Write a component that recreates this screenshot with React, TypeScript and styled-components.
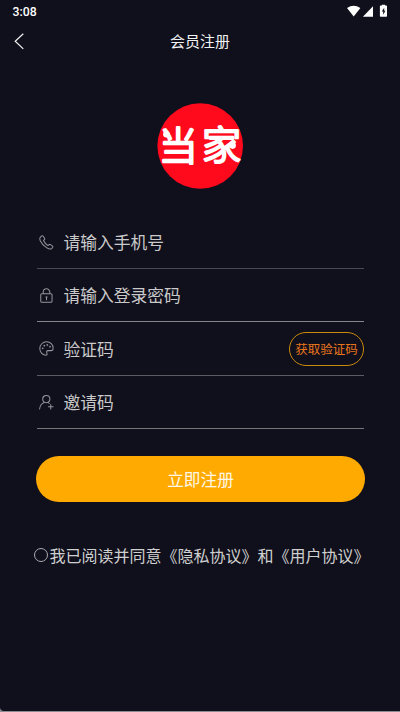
import React from 'react';
import styled, { createGlobalStyle } from 'styled-components';

const GlobalStyle = createGlobalStyle`
  * { box-sizing: border-box; }
  body { margin: 0; background: #8c8b90; overflow: hidden; }
  button, input { font-family: inherit; }
`;

const Screen = styled.main`
  width: 400px;
  height: 711px;
  background: #100f1c;
  border-bottom-left-radius: 4px;
  font-family: "Noto Sans CJK SC", sans-serif;
  color: #cfcfcf;
  display: flex;
  flex-direction: column;
`;

const StatusBar = styled.div`
  height: 24px;
  padding: 0 12px 0 12.5px;
  display: flex;
  align-items: center;
  justify-content: space-between;
  font: 500 12.3px/24px Roboto, sans-serif;
  color: #fff;
`;

const StatusIcons = styled.svg`
  display: block;
  width: 42px;
  height: 14px;
  margin-top: -3px;
`;

const Header = styled.header`
  height: 34px;
  padding-left: 12px;
  display: grid;
  grid-template-columns: 16px 1fr 28px;
  align-items: center;
`;

const BackButton = styled.button`
  width: 16px;
  height: 20px;
  padding: 0;
  border: 0;
  background: none;
  display: block;
`;

const Title = styled.h1`
  margin: 0;
  text-align: center;
  font-size: 15px;
  line-height: 34px;
  font-weight: 400;
  color: #f2f2f2;
`;

const Logo = styled.svg`
  display: block;
  width: 86px;
  height: 86px;
  margin: 45px 0 0 157px;
`;

const Form = styled.form`
  margin: 27px 36px 0 37px;
`;

const Field = styled.label<{ $line: string; $h: number }>`
  height: ${(p) => p.$h}px;
  border-bottom: 1px solid ${(p) => p.$line};
  display: flex;
  align-items: center;
`;

const FieldIcon = styled.svg`
  width: 17px;
  height: 17px;
  margin-left: 1px;
  margin-right: 8.6px;
  fill: none;
  stroke: #96959b;
  stroke-width: 0.95;
  stroke-linecap: round;
  stroke-linejoin: round;
`;

const FieldText = styled.span`
  flex: 1;
  font-size: 16.75px;
  line-height: 24px;
  color: #cacaca;
`;

const CodeButton = styled.button`
  width: 75px;
  height: 34px;
  padding: 0;
  border: 1px solid #cc8a0c;
  border-radius: 17px;
  background: none;
  color: #e8761b;
  font-size: 12.5px;
  line-height: 18px;
`;

const Submit = styled.button`
  width: 329px;
  height: 46px;
  margin: 27px 0 0 36px;
  padding: 0;
  border: 0;
  border-radius: 23px;
  background: #ffaa00;
  color: #fff8e8;
  font-size: 16.67px;
  line-height: 24px;
`;

const Agreement = styled.div`
  margin: 41px 0 0 34px;
  display: flex;
  align-items: center;
  font-size: 16px;
  line-height: 24px;
  white-space: nowrap;
`;

const Radio = styled.span`
  width: 14px;
  height: 14px;
  margin-right: 1.6px;
  border: 1px solid #aaa9ad;
  border-radius: 50%;
`;

const PhoneIcon = () => (
  <FieldIcon viewBox="0 0 16 16">
    <path d="M2.1 3.1 3.5 1.8Q4.3 1.3 4.9 2.1L6.2 4Q6.7 4.8 6 5.4L5.2 6.1Q6.5 8.9 9.4 10.9L10.3 10.1Q11 9.5 11.8 10L13.7 11.4Q14.4 12 13.8 12.7L12.8 13.8Q11.3 14.9 8 12.8 3.9 10.2 2.1 6.4 1.2 4.3 2.1 3.1Z" />
  </FieldIcon>
);

const LockIcon = () => (
  <FieldIcon viewBox="0 0 16 16">
    <rect x="2.6" y="6.3" width="10.6" height="8" rx="1" />
    <path d="M4.9 6.2V4.8a3.1 3.1 0 0 1 6.2 0v1.4M8 9.2v2.7M7.4 9.4h1.2" />
  </FieldIcon>
);

const PaletteIcon = () => (
  <FieldIcon viewBox="0 0 16 16">
    <path d="M14.2 7.9C14.4 4.2 11.6 1.7 8 1.7 4.4 1.7 1.7 4.5 1.7 8s2.5 6.2 5.4 6.3c1.3 0 1.9-.8 1.3-1.9-.7-1.4-.2-2.4 1.2-2.4h2.7c1.3 0 1.9-.7 1.9-2.1Z" />
    <circle cx="4.4" cy="7.8" r=".35" />
    <circle cx="6" cy="5.3" r=".35" />
    <circle cx="8.8" cy="4.6" r=".35" />
    <circle cx="11.3" cy="6.3" r=".35" />
  </FieldIcon>
);

const InviteIcon = () => (
  <FieldIcon viewBox="0 0 16 16">
    <circle cx="7.8" cy="4.8" r="3.4" />
    <path d="M1.5 14.1C1.9 10.8 3.5 8.6 6 7.9M9.5 8.1l1.2.7M12 9.8v4.4M9.8 12h4.4" />
  </FieldIcon>
);

export default function App() {
  return (
    <>
      <GlobalStyle />
      <Screen>
        <StatusBar>
          <span>3:08</span>
          <StatusIcons viewBox="0 0 42 14" fill="#fff">
            <path d="M1 4.1Q7.6-.5 14.4 4.1L7.7 12.6Z" />
            <path d="M27 2.3V12.7H16.9Z" />
            <path d="M35.9 1.5V.7h3.2v.8h1.2q.7 0 .7.7v9.7q0 .8-.7.8h-5.6q-.8 0-.8-.8V2.2q0-.7.8-.7Z" />
            <path d="M38.2 3.8 35.8 7.6h1.4v3.1l2.2-4h-1.2Z" fill="#100f1c" />
          </StatusIcons>
        </StatusBar>
        <Header>
          <BackButton type="button" aria-label="返回">
            <svg width="16" height="20" viewBox="0 0 16 20" fill="none" stroke="#f2f2f2" strokeWidth="1.2">
              <path d="M11.3 2.8 3.2 10.3l8.1 7.6" />
            </svg>
          </BackButton>
          <Title>会员注册</Title>
        </Header>
        <Logo viewBox="0 0 86 86">
          <circle cx="43.2" cy="43" r="42.8" fill="#ff091d" />
          <g
            fill="#fff"
            stroke="#fff"
            strokeWidth="2.5"
            strokeLinejoin="round"
            fontFamily="Noto Sans CJK SC, sans-serif"
            fontWeight="300"
            fontSize="39"
          >
            <text x="1.8" y="56.7">当</text>
            <text x="45" y="55.9">家</text>
          </g>
          <circle cx="9.4" cy="31.2" r="3.3" fill="#fff" />
          <circle cx="75.6" cy="42.6" r="3.3" fill="#fff" />
        </Logo>
        <Form>
          <Field $h={53} $line="#4a4953"><PhoneIcon /><FieldText>请输入手机号</FieldText></Field>
          <Field $h={53} $line="#85848a"><LockIcon /><FieldText>请输入登录密码</FieldText></Field>
          <Field $h={54} $line="#5d5c65">
            <PaletteIcon /><FieldText>验证码</FieldText>
            <CodeButton type="button">获取验证码</CodeButton>
          </Field>
          <Field $h={53} $line="#76757c"><InviteIcon /><FieldText>邀请码</FieldText></Field>
        </Form>
        <Submit type="button">立即注册</Submit>
        <Agreement><Radio /><span>我已阅读并同意《隐私协议》和《用户协议》</span></Agreement>
      </Screen>
    </>
  );
}
